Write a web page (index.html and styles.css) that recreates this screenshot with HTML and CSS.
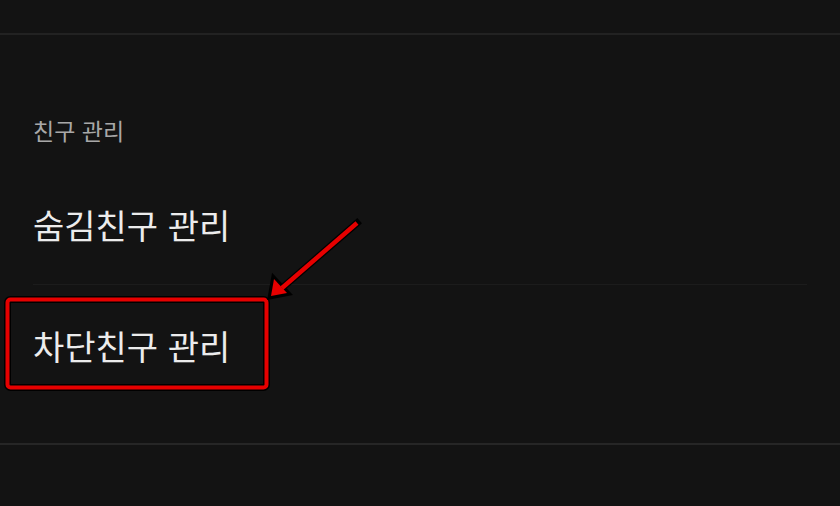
FILE: index.html
```html
<!DOCTYPE html>
<html lang="ko">
<head>
<meta charset="utf-8">
<link rel="stylesheet" href="styles.css">
</head>
<body>
<div class="page">
  <header class="top"></header>
  <section class="group">
    <div class="label">친구 관리</div>
    <div class="row divided">숨김친구 관리</div>
    <div class="row">차단친구 관리</div>
  </section>
  <svg class="annot" width="840" height="506" viewBox="0 0 840 506">
    <rect x="7.5" y="299.5" width="259" height="88" rx="3" fill="none" stroke="#000" stroke-width="7"/>
    <rect x="7.5" y="299.5" width="259" height="88" rx="3" fill="none" stroke="#e60000" stroke-width="4"/>
    <line x1="357" y1="223" x2="282" y2="288" stroke="#000" stroke-width="7" stroke-linecap="square"/>
    <polygon points="269,298 273,276 290,294" fill="#000" stroke="#000" stroke-width="3" stroke-linejoin="miter"/>
    <line x1="357" y1="223" x2="282" y2="288" stroke="#e60000" stroke-width="4.5" stroke-linecap="butt"/>
    <polygon points="271,296 274,279 287,293" fill="#e60000"/>
  </svg>
</div>
</body>
</html>
```
FILE: styles.css
```css
html, body {
  margin: 0;
  padding: 0;
  background: #131313;
}
.page {
  position: relative;
  width: 840px;
  height: 506px;
  overflow: hidden;
  background: #131313;
  font-family: "Noto Sans CJK KR", "Noto Sans", sans-serif;
}
.top {
  height: 33px;
  border-bottom: 2px solid #222222;
}
.group {
  padding-top: 80px;
  padding-bottom: 38px;
  border-bottom: 2px solid #262626;
}
.label {
  padding-left: 33px;
  height: 30px;
  line-height: 30px;
  font-size: 23px;
  color: #a8a8a8;
  margin-bottom: 20px;
}
.row {
  margin: 0 33px 0 33px;
  height: 120px;
  display: flex;
  align-items: center;
  font-size: 34px;
  color: #ececec;
  box-sizing: border-box;
}
.divided {
  border-bottom: 1px solid #1c1c1c;
}
.annot {
  position: absolute;
  left: 0;
  top: 0;
  pointer-events: none;
}
```
